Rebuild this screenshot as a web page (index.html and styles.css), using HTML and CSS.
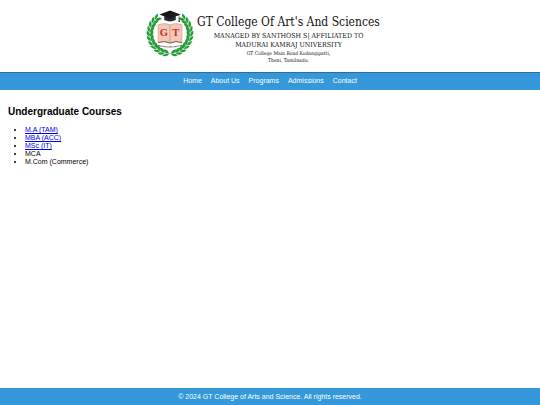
FILE: index.html
```html
<!DOCTYPE html>
<html lang="en">
<head>
<meta charset="utf-8">
<meta name="viewport" content="width=device-width, initial-scale=1">
<title>GT College of Arts and Science</title>
<link rel="stylesheet" href="styles.css">
</head>
<body>
<header class="banner">
  <svg class="logo" viewBox="0 0 50 48" role="img" aria-label="GT College crest">
    <defs>
      <g id="leaf">
        <path d="M27 45.500Q25 49 20.500 48Q22 44.500 27 45.500Z"/>
        <path d="M27 44.800Q24.500 40 20.500 41.500Q22 45.500 27 44.800Z"/>
      </g>
      <g id="branch" fill="#229a35">
        <use href="#leaf" transform="rotate(8 25 24)"/>
        <use href="#leaf" transform="rotate(21 25 24)"/>
        <use href="#leaf" transform="rotate(34 25 24)"/>
        <use href="#leaf" transform="rotate(47 25 24)"/>
        <use href="#leaf" transform="rotate(60 25 24)"/>
        <use href="#leaf" transform="rotate(73 25 24)"/>
        <use href="#leaf" transform="rotate(86 25 24)"/>
        <use href="#leaf" transform="rotate(99 25 24)"/>
        <use href="#leaf" transform="rotate(112 25 24)"/>
        <use href="#leaf" transform="rotate(125 25 24)"/>
        <use href="#leaf" transform="rotate(138 25 24)"/>
        <path d="M25 45A21 21 0 0 1 11 8" fill="none" stroke="#229a35" stroke-width=".4"/>
      </g>
    </defs>
    <use href="#branch"/>
    <use href="#branch" transform="translate(50 0) scale(-1 1)"/>
    <path d="M12.500 15Q19 12 25 15Q31 12 37.500 15V33.500Q31 31 25 34Q19 31 12.500 33.500Z" fill="#f1c9b4" stroke="#a77867" stroke-width=".4"/>
    <path d="M12.500 33.500Q19 31 25 34Q31 31 37.500 33.500" fill="none" stroke="#74473d" stroke-width=".9"/>
    <path d="M25 15V34" stroke="#b48270" stroke-width=".6"/>
    <path d="M11 36Q25 40 38 36" fill="none" stroke="#555" stroke-width="1.200" stroke-dasharray=".8 .5"/>
    <path d="M19 5.500V10Q25 13 31 10V5.500Z" fill="#29292b"/>
    <path d="M25 0L36 4.200L25 8.500L14 4.200Z" fill="#17171a"/>
    <path d="M25 4.200L34.500 5.300V10" fill="none" stroke="#333" stroke-width=".5"/>
    <path d="M34.500 8.500L33.700 12H35.500Z" fill="#222"/>
    <text class="monogram" x="18.500" y="27">G</text>
    <text class="monogram" x="31" y="27">T</text>
  </svg>
  <div class="identity">
    <h1 class="college">GT College Of Art's And Sciences</h1>
    <p class="affiliation">MANAGED BY SANTHOSH S| AFFILIATED TO<br>MADURAI KAMRAJ UNIVERSITY</p>
    <p class="address">GT College Main Road Kodangipatti,<br>Theni, Tamilnadu.</p>
  </div>
</header>
<nav class="menu">
  <a href="#home">Home</a>
  <a href="#about">About Us</a>
  <a href="#programs">Programs</a>
  <a href="#admissions">Admissions</a>
  <a href="#contact">Contact</a>
</nav>
<main class="content">
  <h2 class="heading">Undergraduate Courses</h2>
  <ul class="courses">
    <li><a href="#tam">M.A (TAM)</a></li>
    <li><a href="#acc">MBA (ACC)</a></li>
    <li><a href="#it">MSc (IT)</a></li>
    <li>MCA</li>
    <li>M.Com (Commerce)</li>
  </ul>
</main>
<footer class="footer">© 2024 GT College of Arts and Science. All rights reserved.</footer>
</body>
</html>
```
FILE: styles.css
```css
body {
  display: flex;
  flex-direction: column;
  min-height: 100vh;
  margin: 0;
  background: #fff;
  color: #000;
  font: 7px/8px "Liberation Sans", Arial, sans-serif;
}

.banner {
  display: flex;
  justify-content: center;
  gap: 3px;
  padding: 10px 14px 8px 0;
}

.logo {
  width: 48px;
  height: 47px;
}

.monogram {
  fill: #cf2929;
  font: bold 11px "Liberation Serif", serif;
  text-anchor: middle;
}

.identity {
  padding-top: 4px;
  color: #111;
  font-family: "DejaVu Serif Condensed", "DejaVu Serif", serif;
  text-align: center;
}

.college {
  margin: 0 0 2px;
  font-size: 12px;
  font-weight: normal;
  line-height: 16px;
}

.affiliation {
  margin: 0;
  font-size: 7px;
  line-height: 9px;
}

.address {
  margin: 0;
  font-size: 5px;
  line-height: 7px;
}

.menu {
  display: flex;
  justify-content: center;
  gap: 9px;
  padding: 4px 0 5px;
  border-top: 1px solid #336e98;
  background: #3498db;
}

.menu a {
  color: #fff;
  text-decoration: none;
}

.content {
  flex: 1;
  padding: 16px 8px;
}

.heading {
  margin: 0 0 8px;
  font-size: 10px;
  line-height: 12px;
}

.courses {
  margin: 0;
  padding-left: 17px;
}

.footer {
  padding: 5px 0 4px;
  background: #3498db;
  color: #fff;
  text-align: center;
}
```
